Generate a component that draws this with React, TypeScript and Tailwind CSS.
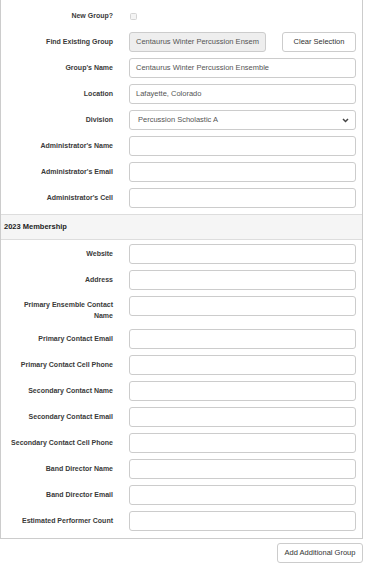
import React from "react";

const font = { fontFamily: '"Liberation Sans", Arial, sans-serif' };

function Label({ children, multi }: { children: React.ReactNode; multi?: boolean }) {
  return (
    <div
      className={`w-[112px] shrink-0 text-right text-[7px] font-bold text-[#3a3a3a] ${
        multi ? "pt-[3px] leading-[11px]" : "self-center leading-[10px]"
      }`}
    >
      {children}
    </div>
  );
}

function TextField({ value = "" }: { value?: string }) {
  return (
    <div className="flex h-[20px] flex-1 items-center overflow-hidden whitespace-nowrap rounded-[3px] border border-[#ccc] bg-white px-[6px] text-[7.5px] text-[#555]">
      {value}
    </div>
  );
}

function Row({
  label,
  value,
  multi,
}: {
  label: React.ReactNode;
  value?: string;
  multi?: boolean;
}) {
  return (
    <div className={`flex gap-[16px] ${multi ? "h-[27px]" : "h-[20px]"}`}>
      <Label multi={multi}>{label}</Label>
      <div className="flex flex-1 items-start">
        <TextField value={value} />
      </div>
    </div>
  );
}

export default function App() {
  const membership = ["Website", "Address"];
  const rest = [
    "Primary Contact Email",
    "Primary Contact Cell Phone",
    "Secondary Contact Name",
    "Secondary Contact Email",
    "Secondary Contact Cell Phone",
    "Band Director Name",
    "Band Director Email",
    "Estimated Performer Count",
  ];

  return (
    <div className="h-[567px] w-[371px] bg-white" style={font}>
      <div className="w-[363px] border-x border-b border-[#ccc]">
        <div className="flex flex-col gap-[6px] pr-[6px] pt-[6px]">
          <div className="flex h-[20px] gap-[16px]">
            <Label>New Group?</Label>
            <div className="flex items-center pl-[1px]">
              <span className="block h-[7px] w-[7px] rounded-[1.5px] border border-[#d4d4d4] bg-[#f4f4f4]" />
            </div>
          </div>

          <div className="flex h-[20px] gap-[16px]">
            <Label>Find Existing Group</Label>
            <div className="flex flex-1 gap-[16px]">
              <div className="flex h-[20px] w-[137px] items-center overflow-hidden whitespace-nowrap rounded-[3px] border border-[#ccc] bg-[#eee] px-[6px] text-[7.5px] text-[#555]">
                Centaurus Winter Percussion Ensem
              </div>
              <button className="h-[20px] flex-1 rounded-[3px] border border-[#ccc] bg-white text-[7.5px] text-[#333]">
                Clear Selection
              </button>
            </div>
          </div>

          <Row label="Group's Name" value="Centaurus Winter Percussion Ensemble" />
          <Row label="Location" value="Lafayette, Colorado" />

          <div className="flex h-[20px] gap-[16px]">
            <Label>Division</Label>
            <div className="flex h-[20px] flex-1 items-center justify-between rounded-[3px] border border-[#ccc] bg-white pl-[8px] pr-[6px] text-[7.5px] text-[#555]">
              <span>Percussion Scholastic A</span>
              <svg width="7" height="5" viewBox="0 0 7 5">
                <path d="M1 1 L3.5 3.5 L6 1" fill="none" stroke="#444" strokeWidth="1.5" />
              </svg>
            </div>
          </div>

          <Row label="Administrator's Name" />
          <Row label="Administrator's Email" />
          <Row label="Administrator's Cell" />
        </div>

        <div className="mt-[6px] flex h-[26px] items-center border-y border-[#ddd] bg-[#f5f5f5] pl-[3px] text-[7.5px] font-bold text-[#222]">
          2023 Membership
        </div>

        <div className="flex flex-col gap-[6px] pb-[7px] pr-[6px] pt-[4px]">
          {membership.map((l) => (
            <Row key={l} label={l} />
          ))}
          <Row
            multi
            label={
              <>
                Primary Ensemble Contact
                <br />
                Name
              </>
            }
          />
          {rest.map((l) => (
            <Row key={l} label={l} />
          ))}
        </div>
      </div>

      <div className="flex w-[363px] justify-end pt-[4px]">
        <button className="h-[20px] w-[86px] rounded-[3px] border border-[#ccc] bg-white text-[7.5px] text-[#333]">
          Add Additional Group
        </button>
      </div>
    </div>
  );
}
